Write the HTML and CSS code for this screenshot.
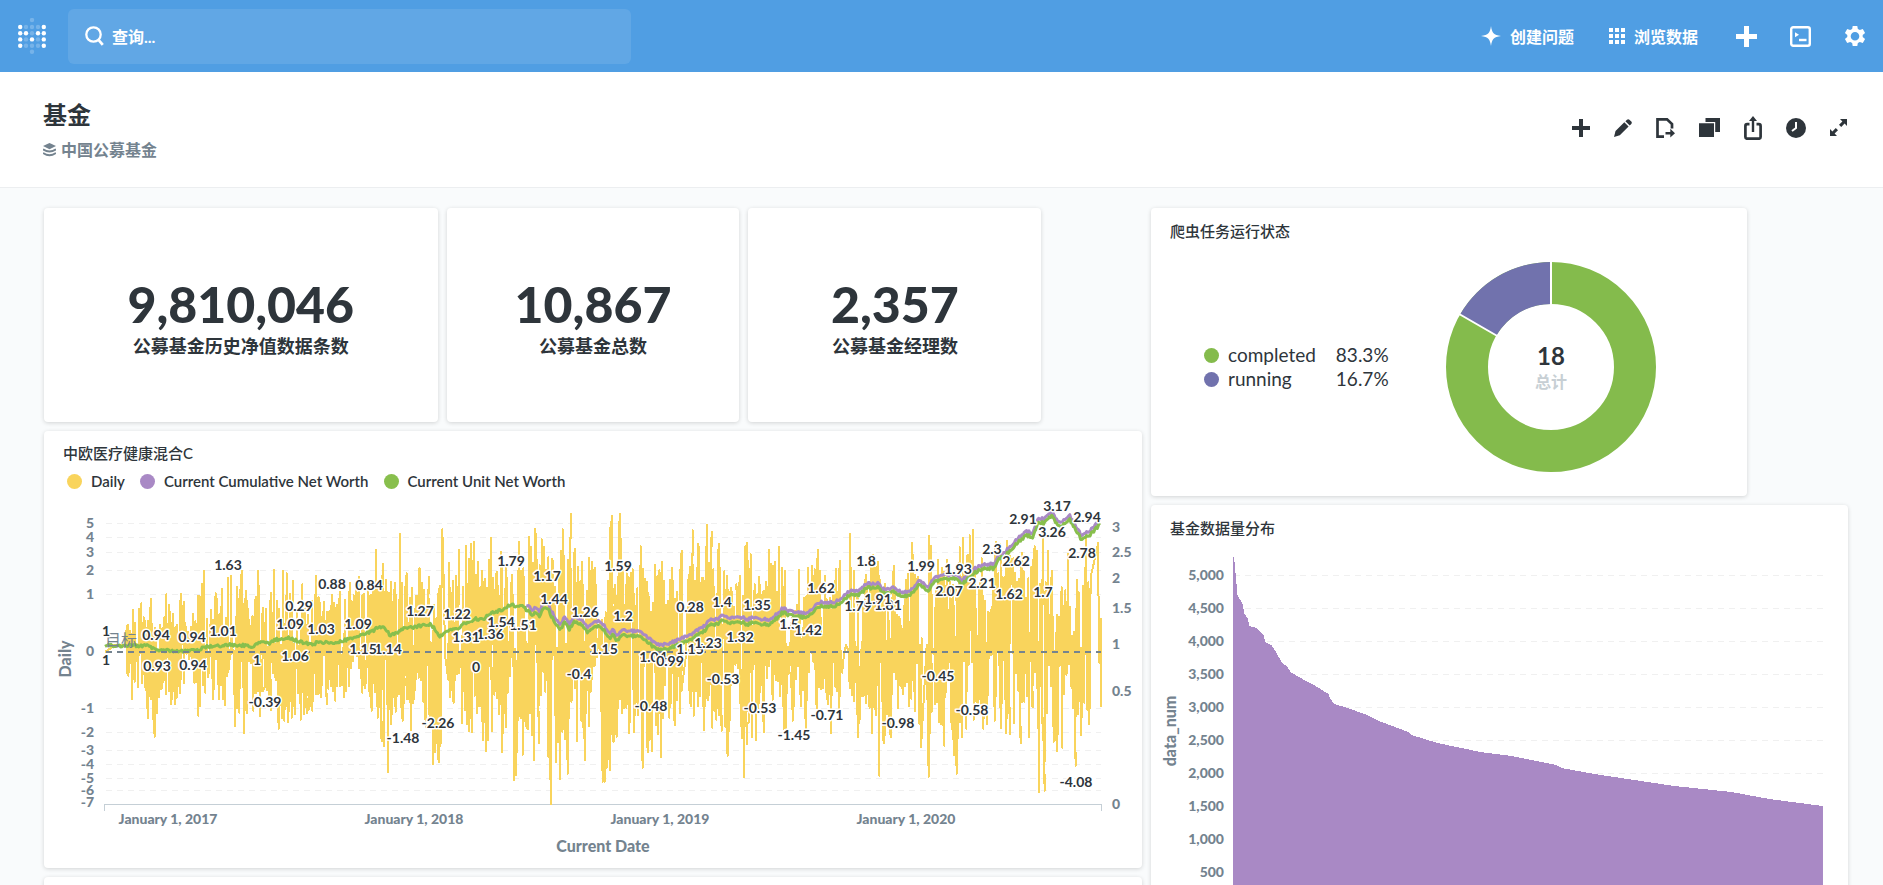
FILE: index.html
```html
<!DOCTYPE html>
<html lang="zh-CN">
<head>
<meta charset="utf-8">
<title>基金</title>
<link rel="stylesheet" href="styles.css">
</head>
<body>
<div class="app">
  <header class="nav">
    <a class="logo" href="#" aria-label="Metabase">
      <svg width="28" height="36" viewBox="0 0 28 36" fill="#fff">
        <g opacity=".22"><circle cx="14" cy="2" r="2.2"/><circle cx="8" cy="9" r="2.2"/><circle cx="14" cy="9" r="2.2"/><circle cx="20" cy="9" r="2.2"/><circle cx="14" cy="15.2" r="2.2"/><circle cx="8" cy="21.4" r="2.2"/><circle cx="20" cy="21.4" r="2.2"/><circle cx="8" cy="27.7" r="2.2"/><circle cx="14" cy="27.7" r="2.2"/><circle cx="20" cy="27.7" r="2.2"/><circle cx="14" cy="33.8" r="2.2"/></g>
        <circle cx="2.2" cy="9" r="2.2"/><circle cx="25.8" cy="9" r="2.2"/><circle cx="2.2" cy="15.2" r="2.2"/><circle cx="8" cy="15.2" r="2.2"/><circle cx="20" cy="15.2" r="2.2"/><circle cx="25.8" cy="15.2" r="2.2"/><circle cx="2.2" cy="21.4" r="2.2"/><circle cx="14" cy="21.4" r="2.2"/><circle cx="25.8" cy="21.4" r="2.2"/><circle cx="2.2" cy="27.7" r="2.2"/><circle cx="25.8" cy="27.7" r="2.2"/>
      </svg>
    </a>
    <label class="search">
      <svg width="19" height="22" viewBox="0 0 19 22" fill="none" stroke="#fff"><circle cx="8.500" cy="9.500" r="7.200" stroke-width="2.300"/><path d="M13.500 14.800l4.300 5" stroke-width="2.700"/></svg>
      <input type="text" placeholder="查询..." aria-label="查询">
    </label>
    <nav class="links">
      <a class="navlink" href="#">
        <svg width="20" height="20" viewBox="0 0 20 20" fill="#fff"><path d="M10 0c1 7 2.600 8.800 10 10-7.400 1.200-9 3-10 10-1-7-2.600-8.800-10-10 7.400-1.200 9-3 10-10z"/></svg>
        创建问题</a>
      <a class="navlink browse" href="#">
        <svg width="16" height="16" viewBox="0 0 16 16" fill="#fff"><path d="M0 0h4v4H0zM6 0h4v4H6zM12 0h4v4h-4zM0 6h4v4H0zM6 6h4v4H6zM12 6h4v4h-4zM0 12h4v4H0zM6 12h4v4H6zM12 12h4v4h-4z"/></svg>
        浏览数据</a>
      <div class="navicons">
        <button class="icon" aria-label="新建"><svg width="21" height="21" viewBox="0 0 21 21"><path d="M8 0h5v8h8v5h-8v8H8v-8H0V8h8z" fill="#fff"/></svg></button>
        <button class="icon" aria-label="SQL"><svg width="21" height="21" viewBox="0 0 21 21" fill="none" stroke="#fff"><rect x="1.200" y="1.200" width="18.600" height="18.600" rx="2" stroke-width="2.400"/><path d="M5 6.200v5l4-2.500z" fill="#fff" stroke="none"/><path d="M9 14h7.500" stroke-width="2.400"/></svg></button>
        <button class="icon" aria-label="设置"><svg width="22" height="22" viewBox="0 0 24 24"><path fill="#fff" fill-rule="evenodd" d="M9.500 0h5l.6 3.300 2.200 1.200L20.500 3.300l2.500 4.300-2.600 2.200v2.400l2.600 2.200-2.500 4.300-3.200-1.200-2.200 1.200-.6 3.300h-5l-.6-3.300-2.200-1.200-3.200 1.200L1 14.400l2.600-2.200V9.800L1 7.600l2.500-4.300 3.200 1.200 2.200-1.200zM12 6.600a4.700 4.700 0 1 0 0 9.400 4.700 4.700 0 0 0 0-9.400z" transform="translate(0 1)"/></svg></button>
      </div>
    </nav>
  </header>

  <section class="titlebar">
    <div>
      <h1>基金</h1>
      <a class="collection" href="#">
        <svg width="13" height="14" viewBox="0 0 13 14"><path d="M6.500 0L13 3.100 6.500 6.300 0 3.100z" fill="#74838f"/><path d="M0 6.300c4 2.800 9 2.800 13 0M0 9.900c4 2.900 9 2.900 13 0" fill="none" stroke="#74838f" stroke-width="1.900"/></svg>
        中国公募基金</a>
    </div>
    <div class="tools">
      <button class="icon" aria-label="添加"><svg width="18" height="18" viewBox="0 0 18 18"><path d="M7 0h4v7h7v4h-7v7H7v-7H0V7h7z"/></svg></button>
      <button class="icon" aria-label="编辑"><svg width="18" height="18" viewBox="0 0 18 18"><path d="M0 18l1.500-6L10.300 3.300l4.300 4.300L5.800 16.300zM11.400 2.300L13 .7q1.200-1 2.400 0l1.900 1.900q1 1.200 0 2.400l-1.600 1.600z"/></svg></button>
      <button class="icon" aria-label="移动"><svg width="19" height="20" viewBox="0 0 19 20"><path d="M8 18.700H1.500V1.300H11l5 4.800v4.400" fill="none" stroke="#2e353b" stroke-width="2.700"/><path d="M9.500 14h4.800v-3.300L19 15.300l-4.700 4.200v-3H9.500z"/></svg></button>
      <button class="icon" aria-label="复制"><svg width="21" height="19" viewBox="0 0 21 19"><path d="M0 5.300h15V19H0zM6.500 0H21v14h-4.800V4H6.500z"/></svg></button>
      <button class="icon" aria-label="分享"><svg width="18" height="24" viewBox="0 0 18 24"><path d="M5.500 8.200H3.200Q1.400 8.200 1.400 10v11q0 1.700 1.800 1.700h11.600q1.800 0 1.800-1.700V10q0-1.800-1.800-1.800h-2.300" fill="none" stroke="#2e353b" stroke-width="2.700"/><path d="M9 0l4 5h-2.800v11H7.800V5H5z"/></svg></button>
      <button class="icon" aria-label="自动刷新"><svg width="20" height="20" viewBox="0 0 20 20"><circle cx="10" cy="10" r="10"/><path d="M10 4v6l-4 3" fill="none" stroke="#fff" stroke-width="2"/></svg></button>
      <button class="icon" aria-label="全屏"><svg width="17" height="17" viewBox="0 0 17 17"><path d="M10 0h7v7l-2.400-2.400-3.400 3.400-2.200-2.200 3.400-3.400zM0 10l2.400 2.400L5.800 9 8 11.200l-3.400 3.400L7 17H0z"/></svg></button>
    </div>
  </section>

  <main class="dashboard">
    <div class="col col-left">
      <article class="card scalar wide"><strong>9,810,046</strong><h2>公募基金历史净值数据条数</h2></article>
      <article class="card scalar"><strong>10,867</strong><h2>公募基金总数</h2></article>
      <article class="card scalar"><strong>2,357</strong><h2>公募基金经理数</h2></article>
      <article class="card full">
        <h3>中欧医疗健康混合C</h3>
        <ul class="legend">
          <li><i class="dot yellow"></i>Daily</li>
          <li><i class="dot purple"></i>Current Cumulative Net Worth</li>
          <li><i class="dot green"></i>Current Unit Net Worth</li>
        </ul>
        <svg id="fund" class="chart" viewBox="44 496 1098 372"></svg>
      </article>
      <article class="card full next"></article>
    </div>
    <div class="col col-right">
      <article class="card pie">
        <h3>爬虫任务运行状态</h3>
        <div class="pie-body">
          <table class="pie-legend">
            <tr><td><i class="dot green2"></i></td><td>completed</td><td>83.3%</td></tr>
            <tr><td><i class="dot indigo"></i></td><td>running</td><td>16.7%</td></tr>
          </table>
          <svg class="donut" width="210" height="210" viewBox="-105 -105 210 210">
            <circle r="84" fill="none" stroke="#84bb4c" stroke-width="42"/>
            <path d="M0-105A105 105 0 0 0-90.900-52.500L-54.600-31.500A63 63 0 0 1 0-63z" fill="#7172ad"/>
            <path d="M0-106v44M-91.800-53l38.100 22" stroke="#fff" stroke-width="2"/>
            <text y="-2" class="pie-total">18</text>
            <text y="21" class="pie-caption">总计</text>
          </svg>
        </div>
      </article>
      <article class="card full bars">
        <h3>基金数据量分布</h3>
        <svg id="dist" class="chart" viewBox="1151 545 697 400"></svg>
      </article>
    </div>
  </main>
</div>
<script src="charts.js"></script>
</body>
</html>
```
FILE: styles.css
```css
* { box-sizing: border-box; }
body {
  margin: 0;
  font-family: Lato, "Noto Sans CJK SC", sans-serif;
  color: #2e353b;
  background: #f9fbfc;
}
h1, h2, h3, ul { margin: 0; padding: 0; }
a { color: inherit; text-decoration: none; }
svg { display: block; flex: none; }
.app { height: 100vh; overflow: hidden auto; scrollbar-width: none; }

.nav {
  display: flex;
  align-items: center;
  height: 72px;
  padding: 0 17px 0 18px;
  background: #509ee3;
  color: #fff;
}
.search {
  display: flex;
  align-items: center;
  gap: 8px;
  width: 563px;
  height: 55px;
  margin-left: 22px;
  padding: 0 17px;
  border-radius: 6px;
  background: rgba(255, 255, 255, .1);
}
.search input {
  flex: 1;
  padding: 0;
  border: 0;
  outline: 0;
  background: none;
  color: #fff;
  font: 700 16px Lato, "Noto Sans CJK SC", sans-serif;
}
.search input::placeholder { color: #fff; opacity: 1; }
.links { display: flex; align-items: center; margin-left: auto; font-weight: 700; font-size: 16px; }
.navlink { display: flex; align-items: center; gap: 9px; }
.browse { margin-left: 35px; }
.navicons { display: flex; align-items: center; gap: 33px; margin-left: 38px; }
.icon { padding: 0; border: 0; background: none; color: inherit; cursor: pointer; }

.titlebar {
  display: flex;
  justify-content: space-between;
  align-items: center;
  height: 116px;
  padding: 0 36px 0 43px;
  border-bottom: 1px solid #eceef0;
  background: #fff;
}
.titlebar h1 { font-size: 24px; line-height: 34px; }
.collection {
  display: flex;
  align-items: center;
  gap: 5px;
  color: #74838f;
  font-size: 16px;
  font-weight: 700;
  line-height: 24px;
  margin-top: 6px;
}
.tools { display: flex; align-items: center; gap: 24px; margin-bottom: 4px; }
.tools svg { fill: #2e353b; }

.dashboard {
  display: grid;
  grid-template-columns: 1098fr 697fr;
  align-items: start;
  gap: 9px;
  padding: 20px 35px 20px 44px;
}
.col { display: grid; gap: 9px; }
.col-left { grid-template-columns: repeat(11, 1fr); }
.col-right { grid-template-columns: repeat(7, 1fr); }
.card {
  min-width: 0;
  border-radius: 4px;
  background: #fff;
  box-shadow: 0 1px 4px rgba(0, 0, 0, .16);
}
.full { grid-column: 1 / -1; }
.card h3 { padding: 12px 19px 0; font-size: 15px; font-weight: 500; line-height: 20px; }
.col-right .card h3 { padding-top: 13px; }
.scalar {
  grid-column: span 3;
  display: flex;
  flex-direction: column;
  align-items: center;
  justify-content: center;
  height: 214px;
  padding-top: 6px;
}
.wide { grid-column: span 4; }
.scalar strong { font-size: 50px; font-weight: 900; line-height: 56px; }
.scalar h2 { font-size: 18px; line-height: 28px; }
.next { height: 300px; }

.legend {
  display: flex;
  gap: 15px;
  height: 33px;
  padding: 8px 23px 0;
  list-style: none;
  font-size: 15px;
  font-weight: 600;
  line-height: 20px;
}
.legend li { display: flex; align-items: center; gap: 9px; height: 20px; }
.dot { display: block; width: 15px; height: 15px; border-radius: 50%; }
.yellow { background: #f9d45c; }
.purple { background: #a989c5; }
.green { background: #88bf4d; }
.green2 { background: #84bb4c; }
.indigo { background: #7172ad; }
.chart { width: 100%; height: auto; font-family: Lato, "Noto Sans CJK SC", sans-serif; }

.pie { grid-column: span 6; padding-bottom: 24px; }
.pie-body { display: flex; align-items: center; gap: 57px; padding: 21px 0 0 53px; }
.pie-legend { border-collapse: collapse; font-size: 19px; line-height: 24px; }
.pie-legend td { padding: 0; }
.pie-legend td:nth-child(1) { padding-right: 9px; }
.pie-legend td:nth-child(2) { padding-right: 20px; }
.pie-total { font-size: 24px; font-weight: 700; fill: #2e353b; text-anchor: middle; }
.pie-caption { font-size: 16px; font-weight: 700; fill: #c7cfd4; text-anchor: middle; }
.bars h3 { padding-bottom: 7px; }

.tick { font-size: 14px; font-weight: 900; fill: #74838f; }
.axis-name { font-size: 16px; font-weight: 900; fill: #74838f; }
.end { text-anchor: end; }
.mid { text-anchor: middle; }
.goal { font-size: 16px; fill: #74838f; }
.value {
  font-size: 14px;
  font-weight: 700;
  fill: #2e353b;
  text-anchor: middle;
  stroke: #fff;
  stroke-width: 3px;
  stroke-linejoin: round;
  paint-order: stroke;
}
.grid { stroke: #f0f0f0; stroke-width: 1px; stroke-dasharray: 6 5; shape-rendering: crispEdges; }
.axis { fill: none; stroke: #c5cfd6; stroke-width: 1px; shape-rendering: crispEdges; }
.goal-line { stroke: #74838f; stroke-width: 2px; stroke-dasharray: 6 5; shape-rendering: crispEdges; }
.line { fill: none; stroke-width: 3px; stroke-linejoin: round; }
.daily { stroke-width: 2px; shape-rendering: crispEdges; }
```
FILE: charts.js
```js
const NS = 'http://www.w3.org/2000/svg';
function add(svg, tag, attrs, text) {
  const el = document.createElementNS(NS, tag);
  for (const k in attrs) el.setAttribute(k, attrs[k]);
  if (text !== undefined) el.textContent = text;
  svg.appendChild(el);
}
let seed = 7;
function rand() {
  seed = (seed * 1103515245 + 12345) % 2147483648;
  return seed / 2147483648;
}
// Each series is stored in blocks at three units per pixel, with the block's left edge first.
function unpack(blocks) {
  const out = [];
  for (const [left, text] of blocks) {
    const n = text.split(/[ ,]+/).map(Number);
    for (let i = 0; i < n.length; i += 2) out.push([left + n[i] / 3, 425 + n[i + 1] / 3]);
  }
  return out;
}
function at(list, x) {
  let i = 1;
  while (i < list.length - 1 && list[i][0] < x) i++;
  const [a, b] = [list[i - 1], list[i]];
  const t = Math.max(0, Math.min(1, (x - a[0]) / (b[0] - a[0])));
  return a[1] + (b[1] - a[1]) * t;
}
function path(list) {
  return 'M' + list.map(p => p[0].toFixed(1) + ' ' + p[1].toFixed(1)).join('L');
}

const highs = unpack([
  [40, '262,602 280,555 304,535 315,590 333,521 345,610 360,600 379,508 388,540 400,567 412,600 423,508 432,530 445,620 459,567 474,512 486,478 491,438 501,583 513,556 527,505 545,491 555,610 565,458 574,452 591,485 605,438 619,498 628,602 647,515 655,438 668,549 690,528 702,434 712,528 730,438 740,445 758,468 772,560 787,478 805,570 829,452 840,540 852,530 864,560 875,510 890,540 900,500 915,525 930,474 957,455 972,508 985,495 1009,374 1029,418 1037,465 1054,470 1065,474 1080,327 1100,445 1115,488 1130,512 1138,430'],
  [400, '20,445 35,488 48,512 59,432 66,475 73,495 86,455 103,540 120,482 127,313 132,500 147,415 158,467 176,374 190,485 198,364 213,357 221,350 247,438 255,462 273,340 290,440 303,381 318,420 335,450 356,350 370,430 387,337 405,313 425,343 432,367 457,401 484,377 488,313 512,266 524,371 546,411 568,398 575,411 585,428 600,590 617,562 632,290 637,272 645,480 660,266 680,445 698,433 712,490 722,364 742,470 753,560 765,421 787,411 800,540 810,465 815,428 830,500 845,377 866,450 878,316 893,357 898,367 907,458 921,300 935,320 957,357 980,452 993,488 1020,452 1036,364 1042,354 1052,388 1064,478 1078,455 1090,500 1107,374 1125,411 1137,367'],
  [770, '14,411 27,367 37,428 45,438 65,580 87,434 102,518 113,428 126,424 144,374 165,452 180,520 197,431 209,408 228,660 241,327 252,438 287,450 310,390 323,411 345,478 372,424 390,585 407,465 426,354 443,455 455,640 470,660 478,333 483,364 504,405 532,405 550,480 569,367 579,340 609,316 635,400 655,560 677,350 711,347 730,400 757,384 775,460 794,364 800,377 818,337 834,377 845,437 860,570 875,487 894,388 908,670 922,465 940,482 948,340 962,455 985,354 993,583']
]);
const lows = unpack([
  [40, '265,752 277,823 285,770 295,787 306,773 320,850 324,880 344,935 350,865 366,790 377,807 394,837 406,837 420,803 432,773 450,690 463,773 475,872 480,843 496,803 505,757 519,823 536,823 556,840 570,690 585,902 592,850 612,925 621,865 640,857 660,872 675,785 692,855 704,740 716,911 733,887 744,891 755,878 766,868 782,884 800,865 817,857 835,807 842,817 860,837 872,783 886,827 900,783 913,817 927,783 933,730 950,690 967,803 975,790 988,800 995,857 1013,878 1025,948 1032,962 1044,1040 1052,898 1068,860 1088,887 1103,823 1112,915 1125,787'],
  [400, '8,887 22,823 33,913 45,787 63,765 70,830 78,905 99,1016 116,1012 123,950 135,690 150,817 161,833 175,745 187,894 207,918 217,921 231,863 250,945 257,979 275,918 290,820 306,982 318,905 330,752 342,1066 348,1050 361,873 368,989 380,910 385,913 401,1005 417,955 430,740 445,995 453,1138 467,1012 481,1062 487,920 504,1046 520,740 532,948 543,884 556,1005 567,903 573,800 590,690 608,1070 614,1070 629,1035 641,950 651,935 667,865 688,925 702,921 715,870 728,1028 745,982 755,979 783,995 795,780 808,878 824,901 840,863 858,690 872,843 881,872 895,843 912,914 927,805 937,908 949,884 965,918 983,992 991,857 1010,690 1033,1056 1040,958 1056,935 1068,945 1080,800 1093,921 1107,723 1140,813'],
  [770, '8,825 22,723 31,813 41,911 47,911 57,743 69,887 85,723 93,843 108,908 117,740 128,690 140,850 157,787 171,823 183,925 195,783 207,853 222,690 239,790 264,937 281,813 306,925 314,853 328,1052 342,955 362,937 372,740 385,850 400,807 418,843 435,857 453,965 476,1056 485,860 496,837 508,891 523,962 535,700 545,911 552,989 561,1046 575,937 589,911 612,884 640,911 652,898 665,690 674,887 693,908 707,925 719,928 731,894 740,720 752,955 763,830 778,937 788,847 798,700 807,1102 816,893 824,1098 837,720 851,950 862,979 877,968 892,710 905,790 917,1022 925,867 934,931 943,833 958,898 975,400 993,847']
]);
const unit = unpack([
  [40, '197,661 290,662 320,662 350,674 415,680 430,677 480,674 490,666 530,664 560,660 600,660 640,665 655,654 690,654 705,644 740,638 760,644 785,652 820,660 830,652 880,652 945,640 960,630 1000,618 1015,606 1030,608 1050,630 1065,628 1090,610'],
  [400, '10,610 30,608 90,598 105,612 120,634 135,620 175,610 185,598 210,592 225,582 250,582 275,564 310,552 338,534 345,548 360,540 380,554 395,570 405,562 420,575 430,546 442,546 455,575 480,615 495,590 508,612 525,590 550,605 562,625 580,605 595,602 615,620 630,640 640,628 652,648 665,630 720,635 740,650 762,668 785,676 820,665 860,650 890,632 915,615 935,595 950,600 965,588 985,595 1030,592 1040,602 1060,590 1080,596 1105,600'],
  [770, '12,588 38,562 55,570 80,575 105,578 130,560 150,545 195,542 215,530 240,510 265,510 290,490 322,485 340,505 375,500 395,515 420,512 450,478 475,500 485,480 510,460 530,465 555,460 575,478 610,445 640,430 670,430 685,405 720,380 745,350 770,330 788,340 805,290 820,295 845,272 860,295 875,305 900,285 915,310 935,345 960,330 990,298']
]);

// Days without trading leave a plain segment.
const closed = [[105, 126], [442, 448], [597, 602], [682, 688], [843, 848], [921.5, 928], [1090.5, 1098]];
const daily = [[105, 652], [111, 648], [113, 645], [126, 645]];
const spikes = highs.concat(lows).sort((a, b) => a[0] - b[0]);
let up = true;
let x = 126;
for (const s of spikes) {
  while (x < s[0] - 0.6) {
    if (!closed.some(c => x > c[0] && x < c[1])) {
      const edge = at(up ? highs : lows, x);
      const r = rand();
      daily.push([x, 652 + (edge - 652) * (r < 0.2 ? r : 0.6 + 0.38 * rand())]);
      if (rand() < 0.9) up = !up;
    }
    x += 1.1;
  }
  daily.push(s);
}
const jagged = [];
for (let px = 105; px <= 1100; px += 1.2) jagged.push([px, at(unit, px) + (rand() - 0.5) * 3]);
const cumulative = jagged.filter(p => p[0] > 526).map(p => [p[0], p[1] - (p[0] < 770 ? 5 : 4)]);

const fund = document.getElementById('fund');
[[5, 523], [4, 537], [3, 552], [2, 570], [1, 594], [0, 651], [-1, 708], [-2, 732], [-3, 750], [-4, 764], [-5, 778], [-6, 790], [-7, 802]].forEach(([v, y]) => {
  if (v !== 0 && v !== -7) add(fund, 'path', { class: 'grid', d: `M106 ${y}.5H1101` });
  add(fund, 'text', { class: 'tick end', x: 94, y: y + 5 }, v);
});
[[3, 527], [2.5, 552], [2, 578], [1.5, 608], [1, 644], [0.5, 691], [0, 804]].forEach(([v, y]) =>
  add(fund, 'text', { class: 'tick', x: 1112, y: y + 5 }, v));
add(fund, 'path', { class: 'axis', d: 'M104.5 811V804.5H1101.5V811' });
add(fund, 'path', { class: 'line daily', stroke: '#f9d45c', d: path(daily) });
add(fund, 'path', { class: 'line', stroke: '#a989c5', d: path(cumulative) });
add(fund, 'path', { class: 'line', stroke: '#88bf4d', d: path(jagged) });
add(fund, 'path', { class: 'goal-line', d: 'M106 652H1101' });
add(fund, 'text', { class: 'goal', x: 105, y: 646 }, '目标');
[[168, 2017], [414, 2018], [660, 2019], [906, 2020]].forEach(([px, y]) =>
  add(fund, 'text', { class: 'tick mid', x: px, y: 824 }, `January 1, ${y}`));
add(fund, 'text', { class: 'axis-name mid', x: 603, y: 852 }, 'Current Date');
add(fund, 'text', { class: 'axis-name mid', transform: 'translate(71 659) rotate(-90)' }, 'Daily');
[
  ['1', 106, 631], ['1', 106, 660], ['0.94', 156, 635], ['0.93', 157, 666], ['0.94', 192, 637], ['0.94', 193, 665],
  ['1.01', 223, 631], ['1.63', 228, 565], ['1', 257, 660], ['-0.39', 265, 702], ['1.06', 295, 656], ['1.09', 290, 624],
  ['0.29', 299, 606], ['1.03', 321, 629], ['0.88', 332, 584], ['1.09', 358, 624], ['0.84', 369, 585], ['1.14', 388, 649],
  ['1.15', 363, 649], ['-1.48', 403, 738], ['1.27', 420, 611], ['1.22', 457, 614], ['1.36', 490, 634], ['1.31', 466, 637],
  ['1.51', 523, 625], ['1.54', 501, 622], ['0', 476, 667], ['-2.26', 438, 723], ['1.79', 511, 561], ['1.17', 547, 576],
  ['1.44', 554, 599], ['1.26', 585, 612], ['1.2', 623, 616], ['1.59', 618, 566], ['-0.4', 579, 674], ['1.15', 604, 649],
  ['1.04', 653, 657], ['0.99', 670, 661], ['-0.48', 651, 706], ['0.28', 690, 607], ['1.15', 690, 649], ['1.23', 708, 643],
  ['1.4', 722, 602], ['1.35', 757, 605], ['1.32', 740, 637], ['-0.53', 723, 679], ['-0.53', 760, 708], ['-1.45', 794, 735],
  ['1.62', 821, 588], ['1.5', 789, 624], ['1.42', 808, 630], ['-0.71', 827, 715], ['1.8', 866, 561], ['1.79', 858, 606],
  ['1.81', 888, 605], ['1.91', 878, 599], ['-0.98', 898, 723], ['1.99', 921, 566], ['-0.45', 938, 676], ['1.93', 958, 569],
  ['2.07', 949, 591], ['2.21', 982, 583], ['-0.58', 972, 710], ['2.3', 992, 549], ['2.62', 1016, 561], ['1.62', 1009, 594],
  ['1.7', 1043, 592], ['2.91', 1023, 519], ['3.17', 1057, 506], ['3.26', 1052, 532], ['2.94', 1087, 517], ['2.78', 1082, 553],
  ['-4.08', 1076, 782]
].forEach(([t, px, py]) => add(fund, 'text', { class: 'value', x: px, y: py + 5 }, t));

const dist = document.getElementById('dist');
for (let i = 0; i < 10; i++) {
  const y = 575 + i * 33;
  add(dist, 'path', { class: 'grid', d: `M1234 ${y}.5H1823` });
  add(dist, 'text', { class: 'tick end', x: 1224, y: y + 5 }, (5000 - i * 500).toLocaleString('en-US'));
}
const edge = [[1234, 557], [1235, 562], [1236, 573], [1238, 595], [1243, 604], [1245, 614], [1248, 618], [1250, 626], [1257, 628], [1264, 635], [1266, 642], [1272, 645], [1276, 651], [1282, 662], [1288, 667], [1291, 672], [1303, 679], [1313, 684], [1329, 694], [1331, 699], [1335, 704], [1348, 708], [1365, 714], [1382, 722], [1409, 732], [1412, 735], [1438, 743], [1481, 752], [1512, 756], [1557, 765], [1562, 768], [1595, 774], [1628, 779], [1675, 786], [1732, 792], [1770, 799], [1823, 806]];
let steps = 'M1233 905V557';
for (let px = 1234; px <= 1823; px++) steps += `V${Math.round(at(edge, px))}H${px}`;
add(dist, 'path', { fill: '#a989c5', d: steps + 'V905z' });
add(dist, 'text', { class: 'axis-name mid', transform: 'translate(1176 731) rotate(-90)' }, 'data_num');
```
